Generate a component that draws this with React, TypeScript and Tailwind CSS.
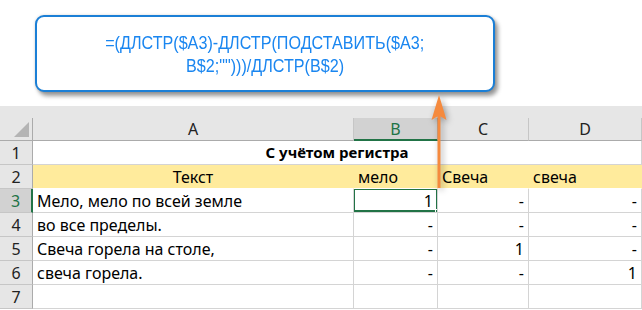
import React from 'react'

const cols = ['A', 'B', 'C', 'D']

const rows: { n: number; a: string; b: string; c: string; d: string }[] = [
  { n: 3, a: 'Мело, мело по всей земле', b: '1', c: '-', d: '-' },
  { n: 4, a: 'во все пределы.', b: '-', c: '-', d: '-' },
  { n: 5, a: 'Свеча горела на столе,', b: '-', c: '1', d: '-' },
  { n: 6, a: 'свеча горела.', b: '-', c: '-', d: '1' },
  { n: 7, a: '', b: '', c: '', d: '' },
]

const cell = 'border-r border-b border-[#d4d4d4] px-1 flex items-center whitespace-nowrap overflow-hidden'
const rowHead =
  'bg-[#e6e6e6] border-r border-r-[#ababab] border-b border-b-[#c6c6c6] flex items-center justify-center text-[#222]'

function Arrow() {
  return (
    <svg
      className="absolute left-[425px] top-[90px] pointer-events-none"
      width="30"
      height="104"
      viewBox="0 0 30 104"
      style={{ filter: 'drop-shadow(2px 2px 3px rgba(0,0,0,0.35))' }}
    >
      <line x1="14" y1="20" x2="14" y2="98" stroke="#f58a3e" strokeWidth="3" />
      <path d="M14 5 L21.5 30 L14 25.5 L6.5 30 Z" fill="#f58a3e" />
    </svg>
  )
}

export default function App() {
  return (
    <div
      className="relative w-[642px] h-[310px] bg-white overflow-hidden text-[16px] text-black"
      style={{ fontFamily: '"Noto Sans", "Open Sans", sans-serif' }}
    >
      {/* formula callout */}
      <div className="h-[106px] pt-[15px] pl-[35px]">
        <div
          className="w-[460px] h-[77px] rounded-[9px] border-2 border-[#1b7fd6] bg-white shadow-[3px_4px_4px_rgba(0,0,0,0.4),0_0_3px_rgba(0,0,0,0.15)] flex flex-col items-center justify-center text-[#1a86f0] text-[19px] leading-[23px]"
          style={{ fontFamily: '"Liberation Sans", Arial, sans-serif' }}
        >
          <div className="scale-x-[0.85] whitespace-nowrap">=(ДЛСТР($A3)-ДЛСТР(ПОДСТАВИТЬ($A3;</div>
          <div className="scale-x-[0.85] whitespace-nowrap">B$2;&quot;&quot;)))/ДЛСТР(B$2)</div>
        </div>
      </div>

      {/* sheet */}
      <div className="bg-[#e6e6e6] pt-[12px]">
        <div className="grid grid-cols-[33px_321px_84px_91px_113px] grid-rows-[23px_repeat(7,24px)]">
          <div className="border-r border-[#ababab] border-b border-b-[#ababab] relative">
            <div className="absolute left-[14px] top-[4px] w-0 h-0 border-l-[15px] border-l-transparent border-b-[15px] border-b-[#b4b4b4]" />
          </div>
          {cols.map((c) =>
            c === 'B' ? (
              <div
                key={c}
                className="bg-[#d2d2d2] border-r border-[#ababab] border-b-2 border-b-[#217346] flex items-center justify-center text-[#217346]"
              >
                {c}
              </div>
            ) : (
              <div
                key={c}
                className="border-r border-[#c6c6c6] border-b border-b-[#ababab] flex items-center justify-center text-[#222]"
              >
                {c}
              </div>
            )
          )}

          <div className={rowHead}>1</div>
          <div className={`${cell} col-span-4 justify-center bg-white font-bold text-[15px]`}>С учётом регистра</div>

          <div className={rowHead}>2</div>
          <div className={`${cell} justify-center bg-[#ffeb9c] border-r-[#ffeb9c] border-b-white`}>Текст</div>
          <div className={`${cell} bg-[#ffeb9c] border-r-[#ffeb9c] border-b-white`}>мело</div>
          <div className={`${cell} bg-[#ffeb9c] border-r-[#ffeb9c] border-b-white`}>Свеча</div>
          <div className={`${cell} bg-[#ffeb9c] border-r-[#ffeb9c] border-b-white`}>свеча</div>

          {rows.map((r) => (
            <React.Fragment key={r.n}>
              {r.n === 3 ? (
                <div className="bg-[#d2d2d2] border-r-2 border-r-[#217346] border-b border-b-[#c6c6c6] flex items-center justify-center text-[#217346]">
                  {r.n}
                </div>
              ) : (
                <div className={rowHead}>{r.n}</div>
              )}
              <div className={`${cell} bg-white`}>{r.a}</div>
              <div className={`${cell} bg-white justify-end relative`}>
                {r.b}
                {r.n === 3 && (
                  <>
                    <div className="absolute -left-px -top-px right-[-1px] bottom-0 border-2 border-[#217346]" />
                    <div className="absolute right-[-4px] bottom-[-3px] w-[6px] h-[6px] bg-[#217346] border border-white" />
                  </>
                )}
              </div>
              <div className={`${cell} bg-white justify-end`}>{r.c}</div>
              <div className={`${cell} bg-white justify-end`}>{r.d}</div>
            </React.Fragment>
          ))}
        </div>
      </div>

      <Arrow />
    </div>
  )
}
